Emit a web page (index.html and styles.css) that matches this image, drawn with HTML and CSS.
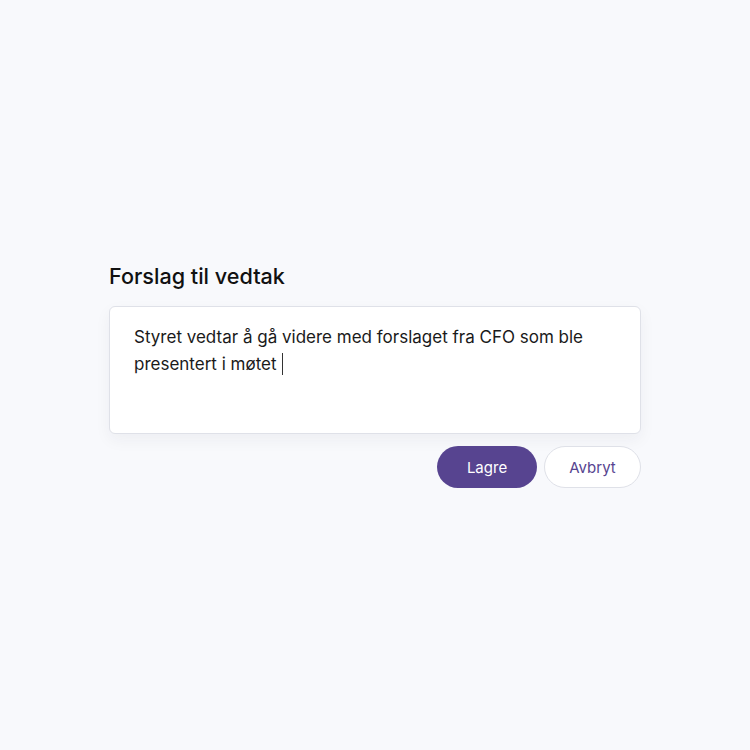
FILE: index.html
```html
<!DOCTYPE html>
<html lang="no">
<head>
  <meta charset="UTF-8" />
  <meta name="viewport" content="width=device-width, initial-scale=1.0" />
  <title>Forslag til vedtak</title>
  <link rel="stylesheet" href="styles.css">
</head>
<body>
  <main class="vedtak">
    <h2 class="vedtak-tittel">Forslag til vedtak</h2>
    <div class="vedtak-felt">
      <p>Styret vedtar å gå videre med forslaget fra CFO som ble presentert i møtet<span class="markor"></span></p>
    </div>
    <div class="knapper">
      <button class="knapp knapp-lagre">Lagre</button>
      <button class="knapp knapp-avbryt">Avbryt</button>
    </div>
  </main>
</body>
</html>
```

FILE: styles.css
```css
html, body {
  height: 100%;
}

body {
  font-family: Inter, "Noto Sans", sans-serif;
  background-color: #f8f9fc;
  margin: 0;
  padding: 0;
  display: flex;
  align-items: center;
  justify-content: center;
}

.vedtak {
  width: 532px;
  margin-top: 1px;
}

.vedtak-tittel {
  margin: 0 0 17px 0;
  font-size: 21.6px;
  font-weight: 500;
  color: #111;
  line-height: 26px;
}

.vedtak-felt {
  background-color: #fff;
  border: 1px solid #dfe1e8;
  border-radius: 6px;
  height: 126px;
  padding: 0 24px;
  box-shadow: 0 6px 16px rgba(30, 30, 60, 0.05);
}

.vedtak-felt p {
  margin: 0;
  padding-top: 17px;
  font-size: 17px;
  line-height: 27px;
  color: #1a1a1a;
}

.markor {
  display: inline-block;
  width: 1px;
  height: 22px;
  background-color: #333;
  vertical-align: -5px;
  margin-left: 5px;
}

.knapper {
  display: flex;
  justify-content: flex-end;
  gap: 7px;
  margin-top: 12px;
}

.knapp {
  font-family: Inter, "Noto Sans", sans-serif;
  font-size: 15px;
  height: 42px;
  border-radius: 21px;
  cursor: pointer;
}

.knapp-lagre {
  width: 100px;
  background-color: #574490;
  color: #fff;
  border: none;
}

.knapp-avbryt {
  width: 97px;
  background-color: #fff;
  color: #574490;
  border: 1px solid #dfe1e8;
}
```
